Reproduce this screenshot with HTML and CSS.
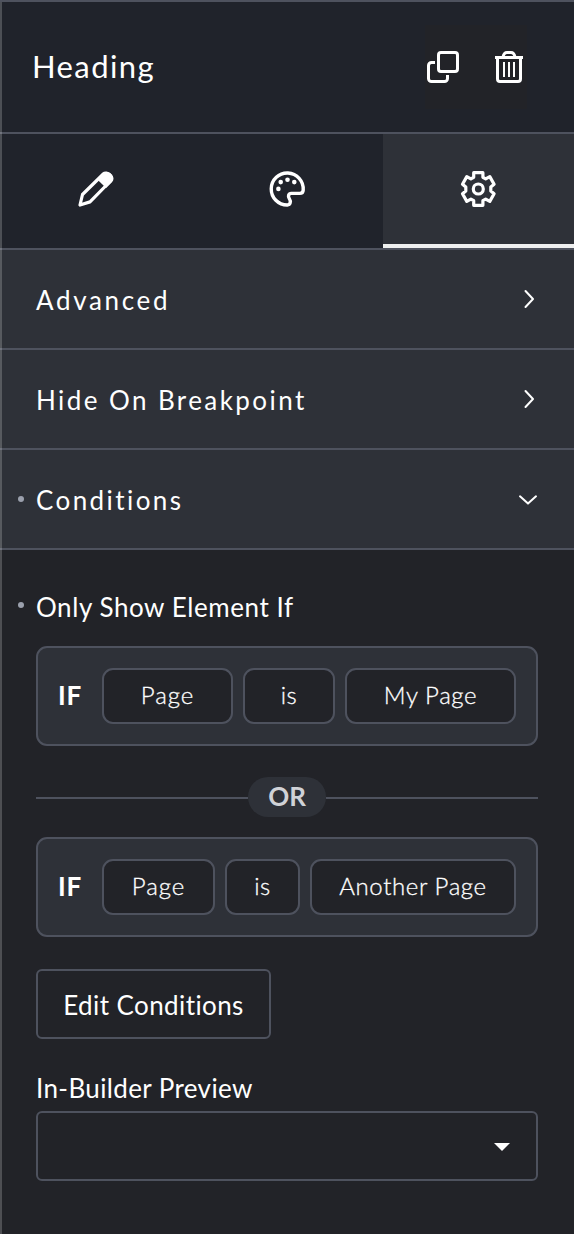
FILE: index.html
```html
<!DOCTYPE html>
<html lang="en">
<head>
<meta charset="utf-8">
<title>Heading</title>
<link rel="stylesheet" href="styles.css">
</head>
<body>
<main class="panel">
  <header class="header">
    <h1 class="title">Heading</h1>
    <div class="actions">
      <svg class="action-icon" width="36" height="36" viewBox="0 0 36 36" fill="none" stroke="#fff" stroke-width="3">
        <rect x="13.500" y="3.500" width="19" height="19" rx="2.500"/>
        <path d="M10 13.500H6.500a3 3 0 0 0-3 3v13a3 3 0 0 0 3 3h13a3 3 0 0 0 3-3V26"/>
      </svg>
      <svg class="action-icon" width="36" height="36" viewBox="0 0 36 36" fill="none" stroke="#fff" stroke-width="3">
        <path d="M4 8.500h28M6.500 9v21a2.500 2.500 0 0 0 2.500 2.500h18a2.500 2.500 0 0 0 2.500-2.500V9M12 8c.6-3 1.800-4.500 4-4.500h4c2.200 0 3.400 1.500 4 4.500"/>
        <path stroke-width="2" d="M13 13v15M18 13v15M23 13v15"/>
      </svg>
    </div>
  </header>
  <nav class="tabs">
    <button class="tab" aria-label="Content">
      <svg width="40" height="40" viewBox="0 0 40 40" fill="none" stroke="#fff" stroke-width="3.200">
        <path stroke-linejoin="round" d="M4 36l2.500-10.500L27.300 5c3.600-3.500 10.600 3 7.200 7L14 32.900z"/>
        <path fill="#fff" stroke="none" d="M21.300 10.500l6-6C29.500 2.400 33 2.700 35.500 5.200s2.600 5.500.6 7.700l-6 6z"/>
      </svg>
    </button>
    <button class="tab" aria-label="Style">
      <svg width="40" height="40" viewBox="1.200 -0.600 40 40" fill="none" stroke="#fff" stroke-width="3.400">
        <path d="M20.500 35.400A16 16 0 1 1 36.400 20.500C36.300 22.500 34.800 23.800 33 23.800H24.500C21.500 23.800 21 26.700 22.500 29C24.500 32 23.500 35.200 20.500 35.400Z"/>
        <g fill="#fff" stroke="none"><circle cx="11.600" cy="19.300" r="2.300"/><circle cx="13.900" cy="12.500" r="2.300"/><circle cx="20.700" cy="10.200" r="2.300"/><circle cx="27.500" cy="12.500" r="2.300"/></g>
      </svg>
    </button>
    <button class="tab tab-active" aria-label="Settings">
      <svg width="40" height="40" viewBox="0.700 0 40 40" fill="none" stroke="#fff" stroke-width="3.200" stroke-linejoin="round">
        <path d="M15.400 3.700h9.200v4.600l2.800 1.600 4.100-2.300 4.300 7.600-3.300 2.700v4.200l3.300 2.700-4.300 7.600-4.100-2.300-2.800 1.600v4.600h-9.200v-4.600l-2.800-1.600-4.100 2.300-4.300-7.600 3.300-2.700v-4.200l-3.300-2.700 4.300-7.600 4.100 2.300 2.800-1.600z"/>
        <circle cx="20" cy="20" r="5"/>
      </svg>
    </button>
  </nav>
  <section class="row"><span class="row-label advanced">Advanced</span>
    <svg class="chevron" width="20" height="20" viewBox="0 0 20 20"><path d="M7.500 2l7.500 8-7.500 8"/></svg></section>
  <section class="row"><span class="row-label">Hide On Breakpoint</span>
    <svg class="chevron" width="20" height="20" viewBox="0 0 20 20"><path d="M7.500 2l7.500 8-7.500 8"/></svg></section>
  <section class="row marked"><span class="row-label">Conditions</span>
    <svg class="chevron" width="20" height="20" viewBox="0 0 20 20"><path d="M2 7.300l8 7.300 8-7.300"/></svg></section>
  <div class="content">
    <h2 class="label marked show-label">Only Show Element If</h2>
    <div class="condition first">
      <span class="if">IF</span>
      <span class="chip page">Page</span><span class="chip">is</span><span class="chip">My Page</span>
    </div>
    <div class="divider"><span class="or">OR</span></div>
    <div class="condition second">
      <span class="if">IF</span>
      <span class="chip page">Page</span><span class="chip">is</span><span class="chip">Another Page</span>
    </div>
    <button class="edit">Edit Conditions</button>
    <div class="label preview-label">In-Builder Preview</div>
    <div class="select"><svg width="16" height="8" viewBox="0 0 16 8"><path fill="#fff" d="M0 0h16L8 8z"/></svg></div>
  </div>
</main>
</body>
</html>
```
FILE: styles.css
```css
* { box-sizing: border-box; }
body { margin: 0; background: #222328; color: #fff; font: 26px/36px Lato, sans-serif; font-variant-ligatures: none; }
button { font: inherit; color: inherit; background: none; border: 0; padding: 0; }
svg { display: block; flex: none; }
.panel { position: relative; width: 574px; height: 1234px; border-top: 2px solid #4e525e; background: #222328; overflow: hidden; }
.panel::after { content: ""; position: absolute; left: 0; top: -2px; bottom: 0; width: 2px; background: rgba(255, 255, 255, .2); }
.header { height: 132px; display: flex; align-items: center; justify-content: space-between; padding: 0 47px 0 32px; background: #20232b; border-bottom: 2px solid #4e525e; }
.title { margin: 0; padding-bottom: 3px; font-size: 31px; font-weight: 400; letter-spacing: 1.4px; white-space: nowrap; }
.actions { display: flex; gap: 30px; padding: 24px 0; background: #222328; }
.tabs { height: 116px; display: grid; grid-template-columns: 192px 191px 191px; background: #20232b; border-bottom: 2px solid #4e525e; }
.tab { display: flex; align-items: center; justify-content: center; padding-bottom: 4px; }
.tab-active { background: #2e3138; border-bottom: 4px solid #eeefef; padding-bottom: 0; }
.row { height: 100px; display: flex; align-items: center; justify-content: space-between; padding: 0 36px; background: #2e3138; border-bottom: 2px solid #4e525e; }
.row-label { letter-spacing: 2.42px; padding-top: 2px; white-space: nowrap; }
.advanced { letter-spacing: 2.65px; }
.chevron { fill: none; stroke: #fff; stroke-width: 2; stroke-linecap: round; stroke-linejoin: round; }
.marked { position: relative; }
.marked::before { content: ""; position: absolute; left: 18px; top: 46px; width: 6px; height: 6px; border-radius: 50%; background: #9ba0ad; }
.content { padding: 39px 36px 0; }
.label { margin: 0; font-size: 26px; font-weight: 400; height: 36px; white-space: nowrap; }
.show-label { letter-spacing: .57px; }
.show-label.marked::before { left: -18px; top: 13px; }
.condition { height: 100px; display: grid; column-gap: 10px; align-items: center; padding: 0 20px; border: 2px solid #4e525e; border-radius: 11px; background: #2e3138; }
.first { grid-template-columns: 34px 131px 92px 171px; margin-top: 21px; }
.second { grid-template-columns: 34px 113px 75px 206px; }
.if { font-weight: 700; letter-spacing: .8px; padding-bottom: 2px; }
.chip { height: 56px; display: flex; align-items: center; justify-content: center; border: 2px solid #4e525e; border-radius: 11px; background: #222328; font-size: 24px; font-weight: 300; letter-spacing: .6px; -webkit-text-stroke: .3px #fff; padding-bottom: 2px; white-space: nowrap; }
.page { letter-spacing: .95px; }
.divider { height: 40px; margin: 31px 0 20px; display: flex; align-items: center; }
.divider::before, .divider::after { content: ""; flex: 1; height: 2px; margin-top: 2px; background: #4e525e; }
.or { width: 78px; height: 40px; border-radius: 20px; background: #2e3138; color: #d0d2d7; font-weight: 700; text-align: center; line-height: 39px; }
.edit { display: flex; align-items: center; justify-content: center; width: 235px; height: 70px; padding-top: 2px; margin-top: 32px; border: 2px solid #4e525e; border-radius: 6px; letter-spacing: .4px; }
.preview-label { margin-top: 31px; letter-spacing: .38px; }
.select { height: 70px; margin-top: 5px; display: flex; align-items: center; justify-content: flex-end; padding: 2px 26px 0 0; border: 2px solid #4e525e; border-radius: 6px; }
```
